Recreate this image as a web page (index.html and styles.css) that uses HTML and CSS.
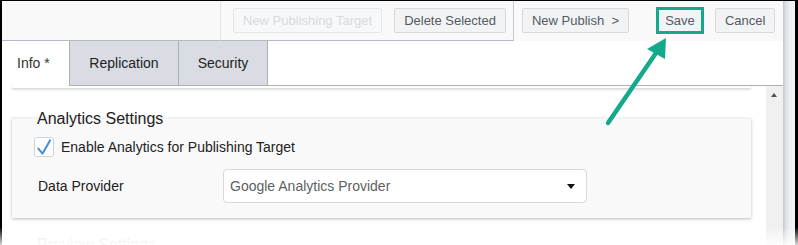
FILE: index.html
```html
<!DOCTYPE html>
<html>
<head>
<meta charset="utf-8">
<link rel="stylesheet" href="styles.css">
</head>
<body>
<div class="page">
  <div class="frame">
    <div class="window">
      <div class="toolbar">
        <div class="tb-left"></div>
        <div class="group group1">
          <button class="btn btn-disabled">New Publishing Target</button>
          <button class="btn btn-delete">Delete Selected</button>
        </div>
        <div class="group group2">
          <button class="btn">New Publish&nbsp; &gt;</button>
          <button class="btn btn-save">Save</button>
          <button class="btn btn-cancel">Cancel</button>
        </div>
      </div>
      <div class="tabs">
        <div class="tab tab-active">Info *</div>
        <div class="tab tab-replication">Replication</div>
        <div class="tab tab-security">Security</div>
        <div class="tab-fill"></div>
      </div>
      <div class="content">
        <div class="scroll">
          <div class="prev-card"></div>
          <div class="section-title">Analytics Settings</div>
          <div class="card">
            <div class="check-row">
              <span class="checkbox">
                <svg width="20" height="20" viewBox="0 0 20 20"><path d="M4.3 11.6 L8.6 16.6 L16 3.4" fill="none" stroke="#3f8fdc" stroke-width="2" stroke-linecap="round" stroke-linejoin="round"/></svg>
              </span>
              <span class="check-label">Enable Analytics for Publishing Target</span>
            </div>
            <div class="field-row">
              <span class="field-label">Data Provider</span>
              <div class="select">
                <span class="select-text">Google Analytics Provider</span>
                <span class="caret"></span>
              </div>
            </div>
          </div>
          <div class="section-title next-title">Preview Settings</div>
        </div>
        <div class="scrollbar"><span class="arrow-up"></span></div>
      </div>
    </div>
    <div class="edge-shadow"></div>
  </div>
  <svg class="annot" width="798" height="245" viewBox="0 0 798 245">
    <line x1="608" y1="123" x2="656" y2="53" stroke="#13aa8b" stroke-width="4.5" stroke-linecap="round"/>
    <polygon points="666,38 647,49 665,59" fill="#13aa8b"/>
  </svg>
  <div class="fade"></div>
</div>
</body>
</html>
```

FILE: styles.css
```css
* { box-sizing: border-box; }
html, body { margin: 0; padding: 0; background: #fff; }
body { font-family: "Liberation Sans", Arial, sans-serif; }

.page {
  position: relative;
  width: 798px;
  height: 245px;
  overflow: hidden;
  background: #fff;
}

.frame {
  display: flex;
  height: 245px;
  border-top: 1px solid #000;
  border-left: 2px solid #000;
  border-right: 3px solid #000;
}

.window {
  width: 781px;
  display: flex;
  flex-direction: column;
  background: #fff;
}

.edge-shadow {
  flex: 1;
  background: linear-gradient(to right, #c3c8cf 0, #dfe2e6 3px, #eef0f2 7px, #f4f5f6 12px);
}

/* toolbar */
.toolbar {
  display: flex;
  height: 40px;
  background: #f9f9f9;
}
.tb-left {
  width: 218px;
  border-bottom: 1px solid #b3bac4;
}
.group {
  display: flex;
  align-items: flex-start;
  padding-top: 7px;
}
.group1 {
  border-left: 1px solid #e0e3e7;
  border-right: 1px solid #c4c9d0;
  border-bottom: 1px solid #b3bac4;
  padding-left: 12px;
  padding-right: 7px;
  gap: 12px;
}
.group2 {
  flex: 1;
  padding-left: 8px;
}

.btn {
  font-family: "Liberation Sans", Arial, sans-serif;
  font-size: 13px;
  height: 25px;
  padding: 0 9px;
  margin: 0;
  border: 1px solid #d6d9de;
  border-radius: 2px;
  background: #f1f3f5;
  color: #555a61;
  line-height: 23px;
  white-space: nowrap;
}
.btn-disabled {
  color: #d7dadf;
  border-color: #e5e7ea;
  background: #f7f8f9;
}
.btn-save {
  height: 27px;
  width: 48px;
  padding: 0;
  margin-top: -1px;
  margin-left: 27px;
  border: 3px solid #13aa8b;
  border-radius: 0;
  line-height: 21px;
  text-align: center;
}
.btn-cancel {
  margin-left: 11px;
}

/* tabs */
.tabs {
  display: flex;
  height: 45px;
}
.tab {
  height: 45px;
  font-size: 14px;
  line-height: 44px;
  color: #222;
  text-align: center;
}
.tab-active {
  width: 67px;
  padding-left: 15px;
  text-align: left;
  color: #333;
}
.tab-replication {
  width: 110px;
  background: #d9dde3;
  border-left: 1px solid #a9b0ba;
  border-right: 1px solid #a9b0ba;
  border-bottom: 1px solid #a9b0ba;
}
.tab-security {
  width: 89px;
  background: #d9dde3;
  border-right: 1px solid #a9b0ba;
  border-bottom: 1px solid #a9b0ba;
}
.tab-fill {
  flex: 1;
  border-bottom: 1px solid #a9b0ba;
}

/* content */
.content {
  flex: 1;
  display: flex;
  min-height: 0;
}
.scroll {
  flex: 1;
  padding: 0 15px 0 10px;
  overflow: hidden;
}
.scrollbar {
  width: 17px;
  background: #f0f0f0;
  position: relative;
}
.arrow-up {
  position: absolute;
  left: 5px;
  top: 7px;
  width: 0;
  height: 0;
  border-left: 3.5px solid transparent;
  border-right: 3.5px solid transparent;
  border-bottom: 4px solid #505050;
}

.prev-card {
  height: 2px;
  background: #fff;
  box-shadow: 0 1px 3px rgba(50, 60, 80, 0.35);
}

.section-title {
  font-size: 16px;
  line-height: 18px;
  color: #222;
  padding-left: 25px;
  margin-top: 22px;
  margin-bottom: -10px;
}
.next-title {
  margin-top: 18px;
  color: #ddd;
}

.card {
  background: #f9f9f9;
  border-top: 1px solid #f0f0f0;
  box-shadow: 0 1px 3px rgba(50, 60, 80, 0.35);
  padding: 18px 0 15px 22px;
}

.check-row {
  display: flex;
  align-items: center;
  height: 20px;
}
.checkbox {
  width: 20px;
  height: 20px;
  border: 1px solid #cfd4db;
  border-radius: 3px;
  background: #fff;
  display: flex;
  align-items: center;
  justify-content: center;
}
.checkbox svg { display: block; margin: -1px; }
.check-label {
  font-size: 14px;
  color: #222;
  margin-left: 7px;
}

.field-row {
  display: flex;
  align-items: center;
  margin-top: 12px;
  padding-left: 4px;
}
.field-label {
  width: 185px;
  font-size: 14px;
  color: #222;
}
.select {
  width: 364px;
  height: 34px;
  border: 1px solid #d6d9de;
  border-radius: 4px;
  background: #fff;
  display: flex;
  align-items: center;
  justify-content: space-between;
  padding: 0 11px 0 6px;
}
.select-text {
  font-size: 14px;
  color: #5c5f63;
}
.caret {
  width: 0;
  height: 0;
  border-left: 4.5px solid transparent;
  border-right: 4.5px solid transparent;
  border-top: 5px solid #111;
}

/* annotation overlay */
.annot {
  position: absolute;
  left: 0;
  top: 0;
  pointer-events: none;
}

.fade {
  position: absolute;
  left: 0;
  right: 0;
  bottom: 0;
  height: 18px;
  background: linear-gradient(to bottom, rgba(255,255,255,0), rgba(255,255,255,0.85));
  pointer-events: none;
}
```
